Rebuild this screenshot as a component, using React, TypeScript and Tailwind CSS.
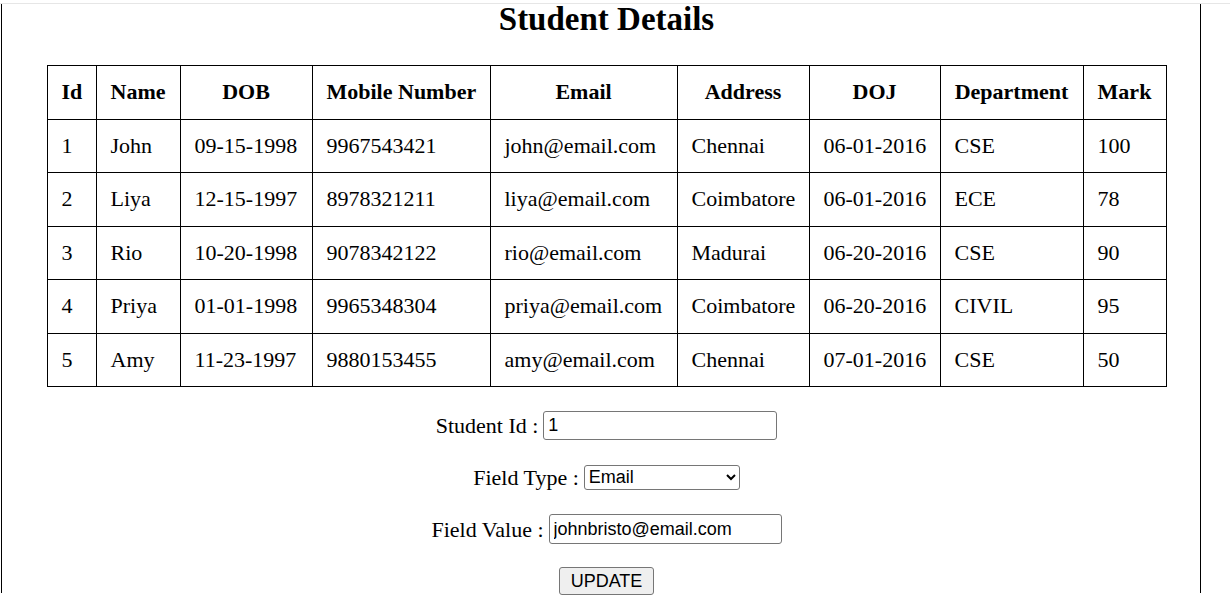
import { useState } from 'react';

interface Student {
    id: number;
    name: string;
    dob: string;
    mobile: string;
    email: string;
    address: string;
    doj: string;
    department: string;
    mark: number;
}

const students: Student[] = [
    { id: 1, name: 'John', dob: '09-15-1998', mobile: '9967543421', email: 'john@email.com', address: 'Chennai', doj: '06-01-2016', department: 'CSE', mark: 100 },
    { id: 2, name: 'Liya', dob: '12-15-1997', mobile: '8978321211', email: 'liya@email.com', address: 'Coimbatore', doj: '06-01-2016', department: 'ECE', mark: 78 },
    { id: 3, name: 'Rio', dob: '10-20-1998', mobile: '9078342122', email: 'rio@email.com', address: 'Madurai', doj: '06-20-2016', department: 'CSE', mark: 90 },
    { id: 4, name: 'Priya', dob: '01-01-1998', mobile: '9965348304', email: 'priya@email.com', address: 'Coimbatore', doj: '06-20-2016', department: 'CIVIL', mark: 95 },
    { id: 5, name: 'Amy', dob: '11-23-1997', mobile: '9880153455', email: 'amy@email.com', address: 'Chennai', doj: '07-01-2016', department: 'CSE', mark: 50 },
];

const headers = [
    { label: 'Id', width: 'w-[49px]' },
    { label: 'Name', width: 'w-[84px]' },
    { label: 'DOB', width: 'w-[132px]' },
    { label: 'Mobile Number', width: 'w-[178px]' },
    { label: 'Email', width: 'w-[187px]' },
    { label: 'Address', width: 'w-[132px]' },
    { label: 'DOJ', width: 'w-[131px]' },
    { label: 'Department', width: 'w-[143px]' },
    { label: 'Mark', width: 'w-[83px]' },
];

const cell = 'border border-black px-[14px] py-[14px] leading-[24.5px] whitespace-nowrap';

const App = () => {
    const [studentId, setStudentId] = useState('1');
    const [fieldType, setFieldType] = useState('email');
    const [fieldValue, setFieldValue] = useState('johnbristo@email.com');

    return (
        <div className="min-h-screen bg-white pt-[3px] text-black font-['Liberation_Serif','Times_New_Roman',serif]">
            <div className="border-t border-[#e6e6e6]">
                <div className="ml-px w-[1200px] h-[589px] border-l border-r border-black pl-[11px]">
                    <h1 className="text-center text-[33px] font-bold leading-[30px]">Student Details</h1>

                    <table className="mx-auto mt-[31px] w-[1119px] table-fixed border-collapse text-[22px]">
                        <thead>
                            <tr>
                                {headers.map((h) => (
                                    <th key={h.label} className={`${cell} ${h.width} text-center font-bold`}>
                                        {h.label}
                                    </th>
                                ))}
                            </tr>
                        </thead>
                        <tbody>
                            {students.map((s) => (
                                <tr key={s.id}>
                                    <td className={cell}>{s.id}</td>
                                    <td className={cell}>{s.name}</td>
                                    <td className={cell}>{s.dob}</td>
                                    <td className={cell}>{s.mobile}</td>
                                    <td className={cell}>{s.email}</td>
                                    <td className={cell}>{s.address}</td>
                                    <td className={cell}>{s.doj}</td>
                                    <td className={cell}>{s.department}</td>
                                    <td className={cell}>{s.mark}</td>
                                </tr>
                            ))}
                        </tbody>
                    </table>

                    <div className="mt-[23px] flex flex-col items-center gap-[22px] text-[22px]">
                        <div className="flex h-[30px] items-center gap-[5px]">
                            <label htmlFor="sid">Student Id :</label>
                            <input
                                id="sid"
                                type="text"
                                value={studentId}
                                onChange={(e) => setStudentId(e.target.value)}
                                className="h-[29px] w-[234px] rounded-[3px] border border-[#767676] px-[4px] text-[18px] font-['Liberation_Sans',Arial,sans-serif]"
                            />
                        </div>

                        <div className="flex h-[30px] items-center gap-[5px]">
                            <label htmlFor="ftype">Field Type :</label>
                            <select
                                id="ftype"
                                value={fieldType}
                                onChange={(e) => setFieldType(e.target.value)}
                                className="h-[25px] w-[156px] rounded-[3px] border border-[#767676] bg-white text-[18px] font-['Liberation_Sans',Arial,sans-serif]"
                            >
                                <option value="name">Name</option>
                                <option value="dob">DOB</option>
                                <option value="mobile">Mobile Number</option>
                                <option value="email">Email</option>
                                <option value="address">Address</option>
                                <option value="doj">DOJ</option>
                                <option value="department">Department</option>
                                <option value="mark">Mark</option>
                            </select>
                        </div>

                        <div className="flex h-[30px] items-center gap-[5px]">
                            <label htmlFor="fvalue">Field Value :</label>
                            <input
                                id="fvalue"
                                type="text"
                                value={fieldValue}
                                onChange={(e) => setFieldValue(e.target.value)}
                                className="h-[30px] w-[233px] rounded-[3px] border border-[#767676] px-[4px] text-[18px] font-['Liberation_Sans',Arial,sans-serif]"
                            />
                        </div>

                        <div className="flex h-[30px] items-center">
                            <button className="h-[28px] w-[95px] rounded-[3px] border border-[#767676] bg-[#efefef] text-[18px] leading-none font-['Liberation_Sans',Arial,sans-serif]">
                                UPDATE
                            </button>
                        </div>
                    </div>
                </div>
            </div>
        </div>
    );
};

export default App;
